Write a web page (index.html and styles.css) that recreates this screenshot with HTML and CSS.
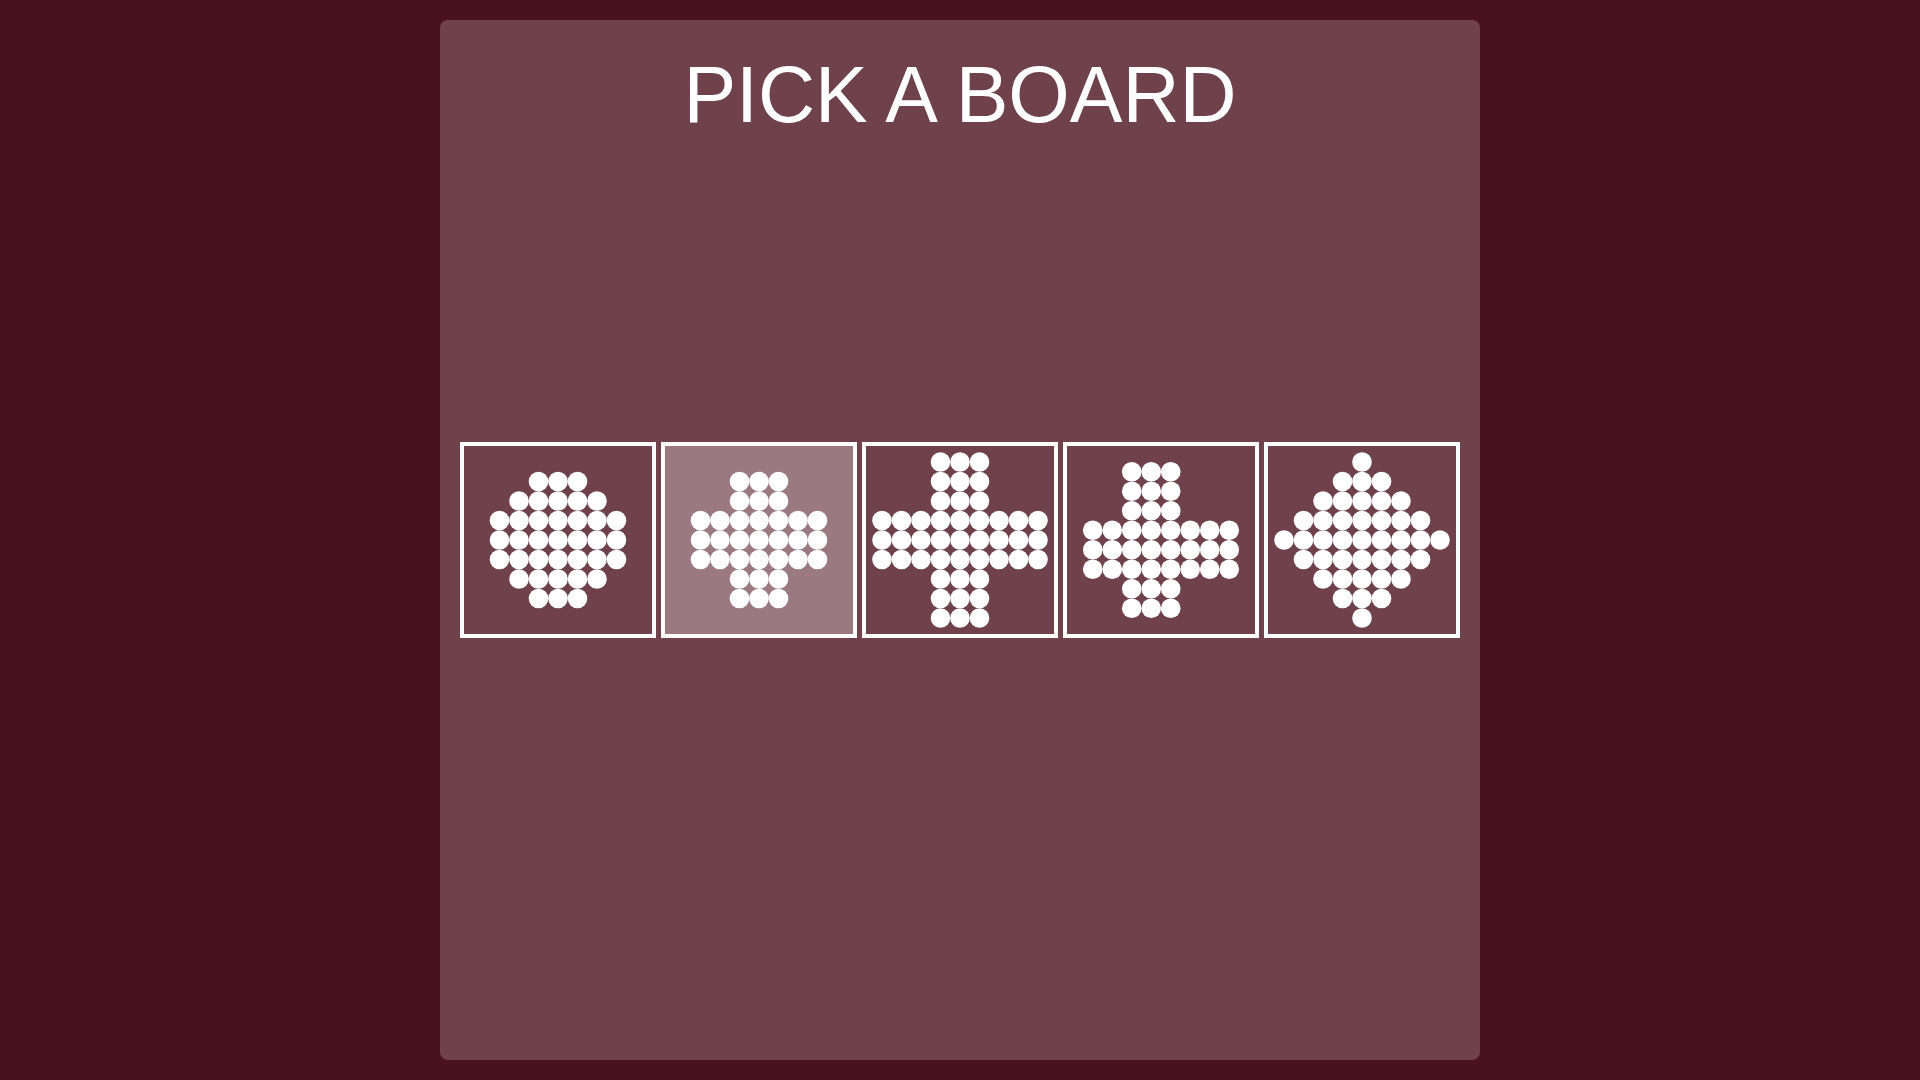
FILE: index.html
```html
<!DOCTYPE html>
<html lang="en">
<head>
    <meta charset="UTF-8">
    <title>Peg Solitaire</title>
    <link rel="stylesheet" href="styles.css">
</head>
<body>

    <div class="painel">
        <h1 class="titulo">PICK A BOARD</h1>

        <!-- Tabuleiros disponíveis -->
        <div class="tabuleiros">
            <div class="tabuleiro" data-board="french"><svg viewBox="0 0 188 188"></svg></div>
            <div class="tabuleiro selecionado" data-board="english"><svg viewBox="0 0 188 188"></svg></div>
            <div class="tabuleiro" data-board="german"><svg viewBox="0 0 188 188"></svg></div>
            <div class="tabuleiro" data-board="asymmetric"><svg viewBox="0 0 188 188"></svg></div>
            <div class="tabuleiro" data-board="diamond"><svg viewBox="0 0 188 188"></svg></div>
        </div>
    </div>

    <script>
        // Formatos dos tabuleiros: x = furo com pino
        const formatos = {
            french: [
                "..xxx..",
                ".xxxxx.",
                "xxxxxxx",
                "xxxxxxx",
                "xxxxxxx",
                ".xxxxx.",
                "..xxx.."
            ],
            english: [
                "..xxx..",
                "..xxx..",
                "xxxxxxx",
                "xxxxxxx",
                "xxxxxxx",
                "..xxx..",
                "..xxx.."
            ],
            german: [
                "...xxx...",
                "...xxx...",
                "...xxx...",
                "xxxxxxxxx",
                "xxxxxxxxx",
                "xxxxxxxxx",
                "...xxx...",
                "...xxx...",
                "...xxx..."
            ],
            asymmetric: [
                "..xxx...",
                "..xxx...",
                "..xxx...",
                "xxxxxxxx",
                "xxxxxxxx",
                "xxxxxxxx",
                "..xxx...",
                "..xxx..."
            ],
            diamond: [
                "....x....",
                "...xxx...",
                "..xxxxx..",
                ".xxxxxxx.",
                "xxxxxxxxx",
                ".xxxxxxx.",
                "..xxxxx..",
                "...xxx...",
                "....x...."
            ]
        };

        const CELULA = 19.5;
        const TAMANHO = 188;

        // Desenha os pinos de cada tabuleiro
        function desenharTabuleiro(el) {
            const linhas = formatos[el.dataset.board];
            const svg = el.querySelector('svg');
            const lado = linhas.length * CELULA;
            const inicio = (TAMANHO - lado) / 2;

            linhas.forEach((linha, r) => {
                [...linha].forEach((ch, c) => {
                    if (ch !== 'x') return;
                    const pino = document.createElementNS('http://www.w3.org/2000/svg', 'circle');
                    pino.setAttribute('cx', inicio + (c + 0.5) * CELULA);
                    pino.setAttribute('cy', inicio + (r + 0.5) * CELULA);
                    pino.setAttribute('r', 9.8);
                    pino.setAttribute('fill', '#fff');
                    svg.appendChild(pino);
                });
            });
        }

        document.querySelectorAll('.tabuleiro').forEach(desenharTabuleiro);
    </script>

</body>
</html>
```

FILE: styles.css
```css
body {
    margin: 0;
    background-color: #4a121e;
    font-family: "Liberation Sans", Arial, sans-serif;
    color: #fff;
}

/* Painel central */
.painel {
    box-sizing: border-box;
    width: 1040px;
    height: 1040px;
    margin: 20px auto;
    padding: 0 20px;
    background-color: #6f424b;
    border-radius: 8px;
    display: grid;
    grid-template-rows: 1fr auto 1fr;
}

.titulo {
    margin: 30px 0 0;
    font-size: 79px;
    font-weight: normal;
    line-height: 90px;
    text-align: center;
    align-self: start;
}

/* Linha de tabuleiros */
.tabuleiros {
    display: flex;
    gap: 5px;
}

.tabuleiro {
    box-sizing: border-box;
    width: 196px;
    height: 196px;
    border: 4px solid #fff;
    cursor: pointer;
}

.tabuleiro svg {
    display: block;
    width: 188px;
    height: 188px;
}

.selecionado {
    background-color: #9a7a80;
}
```
